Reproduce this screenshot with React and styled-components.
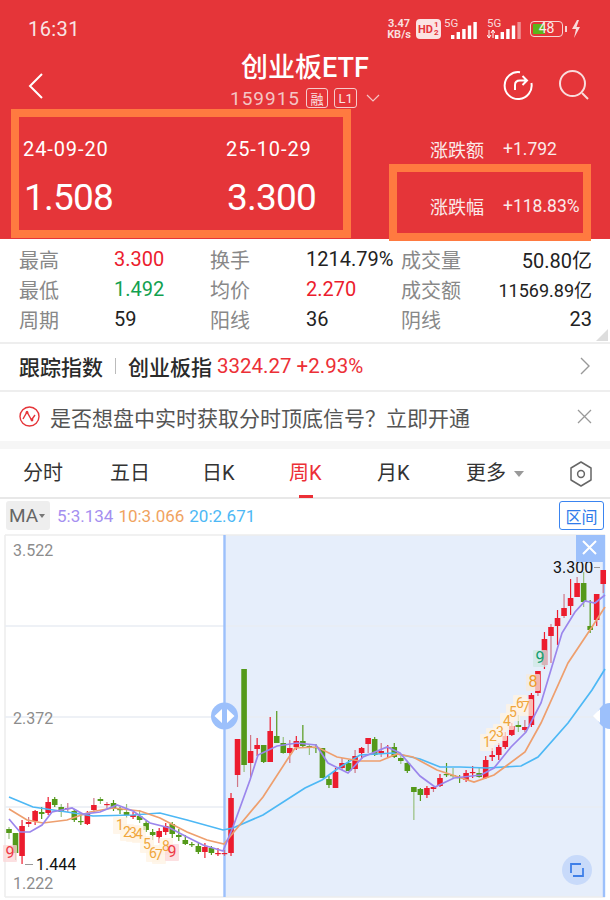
import styled, { createGlobalStyle } from 'styled-components';

const GlobalStyle = createGlobalStyle`
  html, body {
    margin: 0;
    padding: 0;
    background: #fff;
  }
  * {
    box-sizing: border-box;
  }
  body {
    font-family: Roboto, 'Noto Sans CJK SC', sans-serif;
  }
`;

const RED = '#e53539';
const UP = '#ec1c2e';
const DOWN = '#54991a';

const Page = styled.div`
  width: 610px;
  height: 900px;
  overflow: hidden;
  background: #fff;
  color: #222;
`;

const Header = styled.header`
  position: relative;
  height: 239px;
  background: ${RED};
  color: #fff;
`;

const StatusBar = styled.div`
  height: 48px;
  padding: 18px 0 0 28px;
  display: flex;
  justify-content: space-between;
  align-items: flex-start;
`;

const Clock = styled.span`
  font-size: 20px;
  line-height: 22px;
  letter-spacing: 0.4px;
  color: #f8e4e4;
`;

const StatusIcons = styled.div`
  display: flex;
  align-items: center;
  height: 22px;
  padding-right: 28px;
`;

const Speed = styled.span`
  width: 28px;
  margin-right: 3px;
  font-size: 11px;
  font-weight: 700;
  line-height: 11px;
  text-align: center;
  color: #f9dede;
`;

const HdBadge = styled.span`
  display: flex;
  align-items: center;
  flex-shrink: 0;
  height: 20px;
  width: 25px;
  margin-right: 3px;
  padding-left: 2px;
  border-radius: 4px;
  background: #fbe3e3;
  color: ${RED};
  font-size: 11px;
  font-weight: 700;
`;

const HdDigits = styled.span`
  font-size: 8px;
  line-height: 8px;
  margin-left: 1px;
`;

const Network = styled.span`
  position: relative;
  display: block;
  flex-shrink: 0;
  width: ${props => props.$width}px;
  height: 20px;
  margin-right: ${props => props.$gap}px;
`;

const NetworkLabel = styled.span`
  position: absolute;
  left: 0;
  top: -1px;
  font-size: 11.5px;
  line-height: 11px;
  color: #f8dada;
`;

const Battery = styled.span`
  position: relative;
  display: block;
  flex-shrink: 0;
  width: 33px;
  height: 16px;
  border: 1.5px solid #f6d5d5;
  border-radius: 4px;
  overflow: hidden;
  text-align: center;
  font-size: 14px;
  line-height: 13px;
  color: #fbeaea;
`;

const BatteryFill = styled.span`
  position: absolute;
  left: 2px;
  top: 2px;
  bottom: 2px;
  width: 12px;
  background: #5cb51c;
`;

const BatteryText = styled.span`
  position: relative;
`;

const BatteryNub = styled.span`
  flex-shrink: 0;
  width: 2px;
  height: 6px;
  margin: 0 3px 0 2px;
  background: #f6d5d5;
`;

const NavBar = styled.div`
  position: relative;
  height: 60px;
  padding-top: 5px;
  text-align: center;
`;

const Title = styled.div`
  font-size: 27px;
  line-height: 31px;
  font-weight: 500;
`;

const SubTitle = styled.div`
  display: flex;
  justify-content: center;
  align-items: center;
  gap: 6px;
  height: 22px;
  margin-top: 3px;
  font-size: 19px;
  letter-spacing: 1px;
  color: #f4c5c5;
`;

const Tag = styled.span`
  display: flex;
  align-items: center;
  justify-content: center;
  width: ${props => props.$wide ? '23px' : '22px'};
  height: 20px;
  border: 1px solid #f6cccc;
  border-radius: 3px;
  font-size: 13px;
  letter-spacing: 0;
  color: #fbe5e5;
`;

const BackIcon = styled.svg`
  position: absolute;
  left: 28px;
  top: 24px;
`;

const NavActions = styled.div`
  position: absolute;
  right: 20px;
  top: 21px;
  display: flex;
  gap: 24px;
`;

const RangeRow = styled.div`
  display: flex;
  padding-top: 28px;
`;

const RangeColumn = styled.div`
  width: ${props => props.$width}px;
  padding-left: ${props => props.$left}px;
`;

const RangeDate = styled.div`
  font-size: 20px;
  line-height: 26px;
  letter-spacing: 0.9px;
`;

const RangeValue = styled.div`
  margin-top: 14px;
  margin-left: 1px;
  font-size: 37px;
  line-height: 44px;
  letter-spacing: -0.8px;
`;

const ChangeColumn = styled.div`
  flex: 1;
  padding-left: 77px;
`;

const ChangeRow = styled.div`
  display: flex;
  align-items: center;
  height: 26px;
  margin-bottom: ${props => props.$gap || 0}px;
  font-size: 17.5px;
  color: #fbeaea;
`;

const ChangeLabel = styled.span`
  width: 73px;
  font-size: 18px;
`;

const Marker = styled.div`
  position: absolute;
  left: ${props => props.$x}px;
  top: ${props => props.$y}px;
  width: ${props => props.$w}px;
  height: ${props => props.$h}px;
  border: 8px solid #ff7a40;
  pointer-events: none;
`;

const Stats = styled.section`
  position: relative;
  height: 105px;
  padding: 5px 18px 0 19px;
  display: grid;
  grid-template-columns: 95px 96px 96px 95px 96px 1fr;
  grid-auto-rows: 30px;
  align-items: center;
  border-bottom: 2px solid #eee;
  font-size: 20px;
`;

const StatLabel = styled.span`
  color: #888;
`;

const StatValue = styled.span`
  white-space: nowrap;
  color: ${props => props.$color || '#222'};
  text-align: ${props => props.$right ? 'right' : 'left'};
  font-size: ${props => props.$small ? '18px' : '20px'};
`;

const CornerMark = styled.span`
  position: absolute;
  right: 2px;
  bottom: 1px;
  width: 0;
  height: 0;
  border-left: 12px solid transparent;
  border-bottom: 12px solid #ddd;
`;

const TrackRow = styled.div`
  display: flex;
  align-items: center;
  height: 48px;
  padding: 0 20px 2px 19px;
  border-bottom: 2px solid #eee;
  font-size: 21px;
  font-weight: 500;
  color: #2a2a2a;
`;

const TrackDivider = styled.span`
  width: 1px;
  height: 16px;
  margin: 0 12px;
  background: #bbb;
`;

const TrackQuote = styled.span`
  margin-left: 5px;
  font-size: 20.5px;
  font-weight: 400;
  color: #ec2f36;
`;

const Push = styled.span`
  margin-left: auto;
  display: flex;
`;

const NoticeRow = styled.div`
  display: flex;
  align-items: center;
  gap: 10px;
  height: 49px;
  padding: 0 18px 0 19px;
  font-size: 21px;
  color: #555;
`;

const Gap = styled.div`
  height: 8px;
  background: #f6f6f6;
`;

const Tabs = styled.nav`
  position: relative;
  display: flex;
  height: 50px;
  padding-top: 12px;
  border-bottom: 2px solid #e8e8e8;
  font-size: 20px;
  line-height: 24px;
  color: #333;
`;

const Tab = styled.span`
  position: relative;
  width: ${props => props.$width}px;
  padding-left: ${props => props.$left}px;
  white-space: nowrap;
  color: ${props => props.$active ? '#ec2f36' : '#333'};

  &::after {
    content: '';
    display: ${props => props.$active ? 'block' : 'none'};
    position: absolute;
    left: ${props => props.$left + 10}px;
    top: 34px;
    width: 14px;
    height: 3px;
    background: #ec2f36;
  }
`;

const Caret = styled.span`
  display: inline-block;
  margin-left: 8px;
  vertical-align: 3px;
  border-left: 5.5px solid transparent;
  border-right: 5.5px solid transparent;
  border-top: 6px solid #999;
`;

const SettingsIcon = styled.svg`
  position: absolute;
  right: 17px;
  top: 11px;
`;

const LegendRow = styled.div`
  display: flex;
  align-items: center;
  height: 35px;
  padding: 0 6px 2px 6px;
  font-size: 17px;
`;

const MaChip = styled.span`
  display: flex;
  align-items: center;
  width: 44px;
  height: 29px;
  padding-left: 3px;
  margin-right: 7px;
  border-radius: 3px;
  background: #eee;
  color: #666;
  font-size: 19px;
`;

const MaCaret = styled.span`
  margin-left: 1px;
  border-left: 3.5px solid transparent;
  border-right: 3.5px solid transparent;
  border-top: 4px solid #777;
`;

const LegendItem = styled.span`
  margin-right: 5px;
  color: ${props => props.$color};
`;

const RangeButton = styled.span`
  display: flex;
  align-items: center;
  justify-content: center;
  width: 45px;
  height: 29px;
  margin-left: auto;
  border: 1px solid #3a84f0;
  border-radius: 3px;
  font-size: 16px;
  color: #2f7bea;
`;

const ChartFrame = styled.svg`
  display: block;
  width: 610px;
  height: 366px;
`;

const ChartLabel = styled.text`
  font-family: Roboto, sans-serif;
  font-size: 16px;
  fill: ${props => props.$dark ? '#111' : '#8c8c8c'};
`;

const StepLabel = styled.text`
  font-family: Roboto, sans-serif;
  font-size: ${props => props.$big ? 16 : 14}px;
  text-anchor: middle;
  fill: ${props => props.$color};
`;

const stats = [
  ['最高', '3.300', UP, '换手', '1214.79%', null, '成交量', '50.80亿'],
  ['最低', '1.492', '#12a150', '均价', '2.270', UP, '成交额', '11569.89亿'],
  ['周期', '59', null, '阳线', '36', null, '阴线', '23'],
];

const tabs = [
  { label: '分时', left: 23, width: 110 },
  { label: '五日', left: 0, width: 92 },
  { label: '日K', left: 0, width: 87 },
  { label: '周K', left: 0, width: 88, active: true },
  { label: '月K', left: 0, width: 89 },
];

// i-th candle: [colour, wick top, body top, body bottom, wick bottom, pale wick]
const candles = [
  ['g', 827, 829, 833, 839, 1], ['g', 833, 833, 853, 860, 1], ['r', 820, 826, 856, 864], ['r', 817, 822, 824, 827, 1],
  ['r', 810, 811, 821, 825], ['g', 807, 812, 814, 819], ['r', 797, 802, 813, 815], ['g', 797, 799, 805, 807],
  ['g', 804, 807, 812, 817, 1], ['r', 803, 808, 809, 812, 1], ['g', 809, 811, 820, 822], ['g', 815, 821, 822, 825],
  ['r', 811, 813, 824, 825], ['r', 798, 805, 810, 811, 1], ['g', 797, 799, 801, 804, 1], ['r', 802, 804, 805, 808, 1],
  ['g', 800, 803, 809, 811], ['g', 807, 809, 810, 814], ['g', 804, 812, 815, 818, 1], ['r', 812, 815, 817, 819],
  ['g', 810, 816, 820, 823, 1], ['g', 821, 823, 830, 832], ['g', 829, 832, 835, 840], ['r', 828, 831, 837, 843],
  ['r', 823, 826, 832, 835], ['g', 822, 824, 834, 838], ['g', 829, 835, 837, 841], ['g', 835, 840, 844, 845],
  ['g', 842, 844, 845, 847], ['g', 843, 846, 852, 854], ['r', 843, 847, 852, 858], ['g', 846, 848, 853, 855],
  ['r', 848, 853, 854, 856], ['r', 850, 853, 854, 856, 1], ['r', 793, 798, 853, 856], ['r', 739, 739, 775, 787, 1],
  ['g', 669, 669, 765, 772, 1], ['r', 735, 751, 763, 777, 1], ['r', 738, 745, 749, 756], ['g', 745, 745, 762, 763],
  ['r', 717, 731, 762, 762], ['g', 711, 736, 743, 743], ['g', 737, 743, 753, 754, 1], ['r', 740, 748, 753, 763, 1],
  ['r', 736, 741, 747, 750], ['g', 725, 741, 746, 748], ['g', 744, 746, 748, 755, 1], ['g', 744, 747, 748, 753],
  ['g', 748, 748, 778, 778], ['g', 776, 779, 785, 788], ['r', 768, 772, 788, 788], ['r', 758, 763, 768, 770, 1],
  ['g', 760, 763, 771, 771], ['r', 750, 756, 769, 773, 1], ['r', 747, 748, 753, 759], ['r', 738, 738, 744, 753, 1],
  ['g', 737, 739, 755, 756], ['r', 743, 751, 753, 757, 1], ['r', 745, 747, 748, 757], ['g', 743, 747, 757, 758],
  ['g', 756, 758, 761, 764, 1], ['g', 762, 763, 771, 773], ['g', 787, 787, 792, 820, 1], ['g', 788, 789, 795, 801],
  ['r', 786, 788, 795, 798], ['r', 787, 787, 789, 792, 1], ['r', 774, 778, 786, 787], ['g', 763, 774, 775, 777],
  ['g', 768, 775, 776, 778, 1], ['g', 775, 777, 778, 783], ['r', 770, 773, 780, 782], ['r', 766, 772, 773, 778],
  ['g', 768, 773, 777, 778, 1], ['r', 756, 760, 778, 779], ['r', 748, 755, 757, 761], ['r', 743, 747, 755, 760],
  ['r', 732, 736, 747, 749], ['r', 723, 726, 735, 736], ['g', 715, 725, 727, 732, 1], ['r', 720, 727, 730, 732, 1],
  ['r', 693, 695, 725, 727], ['r', 671, 671, 693, 696, 1], ['r', 632, 639, 665, 669], ['r', 624, 627, 636, 663, 1],
  ['r', 610, 618, 626, 645], ['r', 594, 608, 616, 618, 1], ['r', 579, 598, 606, 615], ['r', 577, 583, 597, 597, 1],
  ['g', 572, 583, 602, 607, 1], ['g', 600, 626, 630, 633], ['r', 594, 594, 620, 626], ['r', 570, 570, 584, 593, 1],
];

const ma20 = '9,797 33,807 67,812 93,816 133,815 160,813 187,820 223,830 233,828 263,815 305,788 322,780 340,767 360,755 393,753 420,759 440,767 460,767 487,768 521,766 538,757 568,723 592,690 605,669';
const ma10 = '9,809 27,820 43,823 67,820 90,812 113,808 140,811 160,818 187,832 207,840 224,844 233,833 263,797 287,760 295,748 317,747 337,757 360,761 380,761 397,754 413,757 437,770 474,782 494,775 525,752 541,723 568,663 592,627 605,607';
const ma5 = '9,819 20,832 30,832 42,825 52,812 72,808 83,814 100,812 117,805 133,811 150,823 170,828 187,837 203,845 223,851 233,827 250,780 258,755 277,746 297,743 316,745 328,763 348,773 363,757 387,747 400,753 420,776 435,787 454,778 481,775 494,768 511,747 526,732 541,703 562,633 575,612 585,601 595,603 605,595';

// sequence counters printed beside the candles
const steps = [
  [120, 830, '1', 1], [127, 837, '2', 1], [133, 838, '3', 1], [139, 839, '4', 1], [147, 849, '5', 1],
  [153, 858, '6', 1], [159, 860, '7', 1], [166, 851, '8', 1], [10, 858, '9', 0], [172, 857, '9', 0],
  [487, 747, '1', 1], [493, 741, '2', 1], [500, 737, '3', 1], [507, 726, '4', 1], [513, 717, '5', 1],
  [520, 708, '6', 1], [526, 712, '7', 1], [533, 687, '8', 2], [540, 663, '9', 3],
];

const stepStyle = {
  0: { fill: '#fbd5d7', text: '#ee3a46' },
  1: { fill: '#fff3e3', text: '#f0a63c' },
  2: { fill: '#f6eadd', text: '#ee9a2c' },
  3: { fill: '#cfe8e6', text: '#12a070' },
};

const candleX = i => 9 + 6.53 * i;

const Candle = ({ data, index }) => {
  const [side, wickTop, bodyTop, bodyBottom, wickBottom, pale] = data;
  const x = candleX(index);
  const color = side === 'r' ? UP : DOWN;
  const wickColor = pale ? (side === 'r' ? '#cf7787' : '#98bf7e') : color;
  return (
    <g>
      <line x1={x} x2={x} y1={wickTop} y2={wickBottom} stroke={wickColor} strokeWidth="1.2" />
      <rect x={x - 2.8} y={bodyTop} width="5.6" height={Math.max(bodyBottom - bodyTop, 1.2)} fill={color} />
    </g>
  );
};

const Chart = () => (
  <ChartFrame viewBox="0 534 610 366">
    <rect x="224" y="535" width="380" height="362" fill="#e6eefb" />
    <path d="M5 535H605M5 897H605M5 535V897" stroke="#ededed" strokeWidth="1.5" fill="none" />
    <path d="M5 626H605M5 717H605M5 807H605" stroke="#e9edf3" strokeWidth="1.5" />
    <ChartLabel x="13" y="556">3.522</ChartLabel>
    <ChartLabel x="13" y="724">2.372</ChartLabel>
    <ChartLabel x="13" y="889">1.222</ChartLabel>

    <path d="M224.5 535V897M604 535V897" stroke="#9cc0fb" strokeWidth="2.4" />

    {candles.map((c, i) => <Candle key={i} data={c} index={i} />)}

    <polyline points={ma20} fill="none" stroke="#4db8f5" strokeWidth="1.7" />
    <polyline points={ma10} fill="none" stroke="#ee9f6e" strokeWidth="1.7" />
    <polyline points={ma5} fill="none" stroke="#9b86ec" strokeWidth="1.7" />

    {steps.map(([x, y, , kind], i) => (
      <rect key={i} x={x - 7} y={y - 13} width="14" height="17" rx="1" fill={stepStyle[kind].fill} opacity="0.75" />
    ))}
    {steps.map(([x, y, digit, kind], i) => (
      <StepLabel key={i} x={x} y={y} $color={stepStyle[kind].text} $big={kind !== 1}>{digit}</StepLabel>
    ))}

    <ChartLabel x="36" y="870" $dark>1.444</ChartLabel>
    <path d="M25 864.5H33" stroke="#999" />
    <ChartLabel x="553" y="573" $dark>3.300</ChartLabel>
    <path d="M594 567.5H600" stroke="#999" />

    <circle cx="224.5" cy="716" r="13.5" fill="#9cc0fb" />
    <path d="M222 709L214.5 716L222 723ZM227 709L234.5 716L227 723Z" fill="#fff" />
    <path d="M610 703A13.5 13.5 0 0 0 597 716A13.5 13.5 0 0 0 610 729Z" fill="#9cc0fb" />
    <path d="M600 709L593 716L600 723Z" fill="#fff" />

    <rect x="576" y="535" width="27" height="27" fill="#9cc0fb" />
    <path d="M583 541L596 554M596 541L583 554" stroke="#fff" strokeWidth="2" />

    <circle cx="577" cy="870" r="15" fill="#c8dafa" />
    <path d="M581 864H571V873M573 876H583V868" fill="none" stroke="#3f7fe8" strokeWidth="1.8" />
  </ChartFrame>
);

// five signal bars, stepped up from a dot to full height
const SignalBars = ({ roaming }) => (
  <svg width="26" height="17" viewBox="0 0 26 17" style={{ position: 'absolute', right: 0, bottom: 0 }}>
    <rect x="0" y="13" width="3.4" height="4" fill="#fff" />
    <rect x="5.6" y="10" width="3.4" height="7" fill="#fff" />
    <rect x="11.2" y="7" width="3.4" height="10" fill="#fff" />
    <rect x="16.8" y="3.5" width="3.4" height="13.5" fill="#fff" />
    <rect x="22.4" y="0" width="3.4" height="17" fill="#fff" opacity={roaming ? 0.45 : 1} />
  </svg>
);

const DataArrows = () => (
  <svg width="8" height="8" viewBox="0 0 8 8" style={{ position: 'absolute', left: 0, bottom: 1 }}>
    <path d="M2 0V8M0 5L2 8L4 5M6 8V0M4 3L6 0L8 3" fill="none" stroke="#fff" strokeWidth="1" />
  </svg>
);

export default function App() {
  return (
    <Page>
      <GlobalStyle />
      <Header>
        <StatusBar>
          <Clock>16:31</Clock>
          <StatusIcons>
            <Speed>3.47<br />KB/s</Speed>
            <HdBadge>HD<HdDigits>1<br />2</HdDigits></HdBadge>
            <Network $width={33} $gap={10}>
              <NetworkLabel>5G</NetworkLabel>
              <SignalBars />
            </Network>
            <Network $width={34} $gap={9}>
              <NetworkLabel>5G</NetworkLabel>
              <DataArrows />
              <SignalBars roaming />
            </Network>
            <Battery>
              <BatteryFill />
              <BatteryText>48</BatteryText>
            </Battery>
            <BatteryNub />
            <svg width="12" height="20" viewBox="0 0 12 20" style={{ flexShrink: 0 }}>
              <path d="M7 1L2 10H6L4 19L10 8H6.5L9 1Z" fill="#f8dada" />
            </svg>
          </StatusIcons>
        </StatusBar>

        <NavBar>
          <BackIcon width="16" height="28" viewBox="0 0 16 28">
            <path d="M14 2L2 14L14 26" fill="none" stroke="#fff" strokeWidth="2" />
          </BackIcon>
          <Title>创业板ETF</Title>
          <SubTitle>
            159915
            <Tag>融</Tag>
            <Tag $wide>L1</Tag>
            <svg width="14" height="8" viewBox="0 0 14 8" style={{ marginLeft: 3 }}>
              <path d="M1 1L7 7L13 1" fill="none" stroke="#f4c5c5" strokeWidth="1.2" />
            </svg>
          </SubTitle>
          <NavActions>
            <svg width="32" height="32" viewBox="0 0 32 32">
              <path d="M18 3.2A13.5 13.5 0 1 0 29.4 14" fill="none" stroke="#fff" strokeWidth="2" />
              <path d="M13 21V16Q13 11.5 18 11.5H25M20.5 7L25 11.5L20.5 16" fill="none" stroke="#fff" strokeWidth="2" />
            </svg>
            <svg width="32" height="32" viewBox="0 0 32 32">
              <circle cx="14.5" cy="14.5" r="12.5" fill="none" stroke="#f9dcdc" strokeWidth="2" />
              <path d="M24 24L30 30" stroke="#f9dcdc" strokeWidth="2" />
            </svg>
          </NavActions>
        </NavBar>

        <RangeRow>
          <RangeColumn $width={226} $left={23}>
            <RangeDate>24-09-20</RangeDate>
            <RangeValue>1.508</RangeValue>
          </RangeColumn>
          <RangeColumn $width={127} $left={0}>
            <RangeDate>25-10-29</RangeDate>
            <RangeValue>3.300</RangeValue>
          </RangeColumn>
          <ChangeColumn>
            <ChangeRow $gap={31}>
              <ChangeLabel>涨跌额</ChangeLabel>+1.792
            </ChangeRow>
            <ChangeRow>
              <ChangeLabel>涨跌幅</ChangeLabel>+118.83%
            </ChangeRow>
          </ChangeColumn>
        </RangeRow>

        <Marker $x={11} $y={109} $w={340} $h={129} />
        <Marker $x={389} $y={164} $w={202} $h={77} />
      </Header>

      <Stats>
        {stats.map(row => [
          <StatLabel key={row[0]}>{row[0]}</StatLabel>,
          <StatValue key={row[0] + 'v'} $color={row[2]}>{row[1]}</StatValue>,
          <StatLabel key={row[3]}>{row[3]}</StatLabel>,
          <StatValue key={row[3] + 'v'} $color={row[5]}>{row[4]}</StatValue>,
          <StatLabel key={row[6]}>{row[6]}</StatLabel>,
          <StatValue key={row[6] + 'v'} $right $small={row[7].length > 8}>{row[7]}</StatValue>,
        ])}
        <CornerMark />
      </Stats>

      <TrackRow>
        跟踪指数
        <TrackDivider />
        创业板指
        <TrackQuote>3324.27 +2.93%</TrackQuote>
        <Push>
          <svg width="10" height="18" viewBox="0 0 10 18">
            <path d="M1 1L9 9L1 17" fill="none" stroke="#999" strokeWidth="1.4" />
          </svg>
        </Push>
      </TrackRow>

      <NoticeRow>
        <svg width="21" height="21" viewBox="0 0 21 21" style={{ flexShrink: 0 }}>
          <circle cx="10.5" cy="10.5" r="9.5" fill="none" stroke="#e53539" strokeWidth="1.4" />
          <path d="M4 13L8 6L12.5 14L16 9" fill="none" stroke="#e53539" strokeWidth="1.4" />
          <circle cx="8" cy="6.5" r="1.4" fill="#e53539" />
          <circle cx="13" cy="14" r="1.4" fill="#e53539" />
        </svg>
        是否想盘中实时获取分时顶底信号？立即开通
        <Push>
          <svg width="15" height="15" viewBox="0 0 15 15">
            <path d="M1 1L14 14M14 1L1 14" stroke="#999" strokeWidth="1.3" />
          </svg>
        </Push>
      </NoticeRow>

      <Gap />

      <Tabs>
        {tabs.map(tab => (
          <Tab key={tab.label} $left={tab.left} $width={tab.width} $active={tab.active}>
            {tab.label}
          </Tab>
        ))}
        <Tab $left={0} $width={100}>更多<Caret /></Tab>
        <SettingsIcon width="24" height="28" viewBox="0 0 24 28">
          <path d="M12 2L22 8V20L12 26L2 20V8Z" fill="none" stroke="#666" strokeWidth="1.5" strokeLinejoin="round" />
          <circle cx="12" cy="14" r="3.4" fill="none" stroke="#666" strokeWidth="1.5" />
        </SettingsIcon>
      </Tabs>

      <LegendRow>
        <MaChip>MA<MaCaret /></MaChip>
        <LegendItem $color="#a58ff0">5:3.134</LegendItem>
        <LegendItem $color="#f0a35f">10:3.066</LegendItem>
        <LegendItem $color="#4db8f5">20:2.671</LegendItem>
        <RangeButton>区间</RangeButton>
      </LegendRow>

      <Chart />
    </Page>
  );
}
